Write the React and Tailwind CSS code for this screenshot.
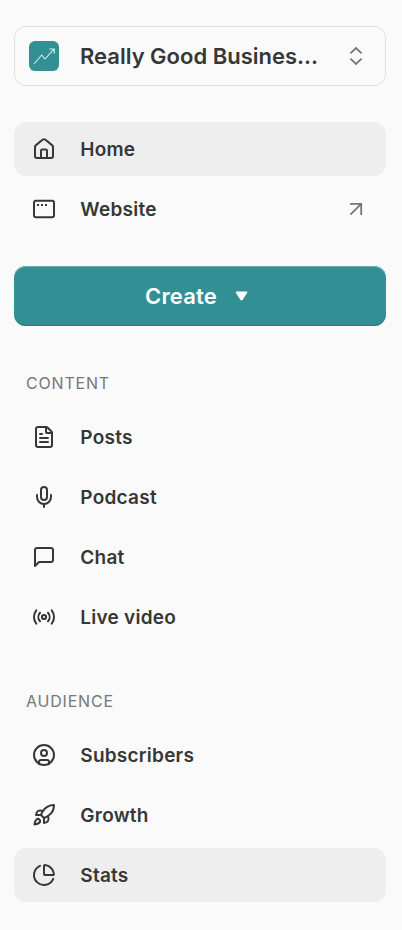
import { ChartPie, CircleUser, FileText, Mic, Rocket } from 'lucide-react'

const CONTENT = [
  { label: 'Posts', icon: FileText },
  { label: 'Podcast', icon: Mic },
  { label: 'Chat', icon: ChatIcon },
  { label: 'Live video', icon: LiveIcon },
]

const AUDIENCE = [
  { label: 'Subscribers', icon: CircleUser },
  { label: 'Growth', icon: Rocket },
  { label: 'Stats', icon: ChartPie, active: true },
]

function Icon({ children }) {
  return (
    <svg
      width="24"
      height="24"
      viewBox="0 0 24 24"
      fill="none"
      stroke="currentColor"
      strokeWidth="2"
      strokeLinecap="round"
      strokeLinejoin="round"
    >
      {children}
    </svg>
  )
}

function HomeIcon() {
  return (
    <Icon>
      <path d="M3 10.2a2.6 2.6 0 0 1 1-2.1l6.5-5.3a2.4 2.4 0 0 1 3 0L20 8.1a2.6 2.6 0 0 1 1 2.1V19a2 2 0 0 1-2 2H5a2 2 0 0 1-2-2z" />
      <path d="M9 21v-7.2a1.2 1.2 0 0 1 1.2-1.2h3.6a1.2 1.2 0 0 1 1.2 1.2V21" />
    </Icon>
  )
}

function WindowIcon() {
  return (
    <Icon>
      <rect x="2" y="3.7" width="20" height="16.6" rx="2" />
      <path d="M5 8h2M9 8h2M13 8h2" strokeWidth="1.9" strokeLinecap="butt" />
    </Icon>
  )
}

function ChatIcon() {
  return (
    <Icon>
      <path d="M21 15a2 2 0 0 1-2 2H7l-4 4V5a2 2 0 0 1 2-2h14a2 2 0 0 1 2 2z" />
    </Icon>
  )
}

function LiveIcon() {
  return (
    <Icon>
      <path d="M4.3 18.7C1.2 14.8 1.2 9.2 4.3 5.3M8 16.2c-2.2-2.4-2.2-6 0-8.4M16 7.8c2.2 2.4 2.2 6 0 8.4M19.7 5.3c3.1 3.9 3.1 9.5 0 13.4" />
      <circle cx="12" cy="12" r="2.1" />
    </Icon>
  )
}

function NavItem({ label, icon: ItemIcon, active, trailing }) {
  return (
    <a
      className={`flex h-[54px] items-center rounded-xl pl-[18px] pr-[23px] ${active ? 'bg-[#eeeeee]' : ''}`}
    >
      <ItemIcon />
      <span className="ml-[24.3px] flex-1 pt-0.5 text-[19px] font-semibold leading-6 tracking-[0.24px]">{label}</span>
      {trailing}
    </a>
  )
}

function Section({ title, items }) {
  return (
    <section>
      <h2 className="pl-3 text-[16px] leading-5 tracking-[0.8px] text-[#777777]">{title}</h2>
      <nav className="mt-[17px] flex flex-col gap-1.5">
        {items.map(item => (
          <NavItem key={item.label} {...item} />
        ))}
      </nav>
    </section>
  )
}

export default function App() {
  return (
    <div className="h-[930px] w-[402px] bg-[#fafafa] pl-[14px] pr-4 pt-[26px] font-['Inter',sans-serif] text-[#363737]">
      <button className="flex h-[60px] w-full items-center rounded-xl border border-[#e1e1e1] px-[14px] text-left">
        <span className="flex size-[30px] items-center justify-center rounded-md bg-[#329094]">
          <svg width="30" height="30" viewBox="0 0 30 30" fill="none" stroke="#d9eeee" strokeWidth="1.1">
            <path d="M5 23l7.7-9 3.3 4 9-9.8M20.3 8h5v4.5" />
          </svg>
        </span>
        <span className="ml-[21px] flex-1 whitespace-nowrap text-[22px] font-semibold">
          Really Good Busines...
        </span>
        {/* up / down switcher */}
        <svg className="mr-2" width="14" height="20" viewBox="0 0 14 20" fill="none" stroke="#777777" strokeWidth="1.8">
          <path d="M1.4 7.4L7 2.1l5.6 5.3M1.4 12.6L7 17.9l5.6-5.3" />
        </svg>
      </button>

      <nav className="mt-9 flex flex-col gap-1.5">
        <NavItem label="Home" icon={HomeIcon} active />
        <NavItem
          label="Website"
          icon={WindowIcon}
          trailing={
            <svg width="14" height="14" viewBox="0 0 14 14" fill="none" stroke="#777777" strokeWidth="1.8">
              <path d="M1 1.9h11.2V13M12.2 1.9L1.4 12.7" />
            </svg>
          }
        />
      </nav>

      <button className="mt-[30px] flex h-[60px] w-full items-center justify-center gap-[18px] rounded-xl bg-[#329094] pr-[7px] text-[22px] font-semibold tracking-[0.15px] text-white shadow-[inset_0_1px_1px_#6cb1b3,inset_0_-1px_1px_#277b7e]">
        Create
        <svg width="13" height="10" viewBox="0 0 13 10" fill="white" stroke="white" strokeWidth="1.6" strokeLinejoin="round">
          <path d="M1.5 1.3h10L7 8.2q-.5.6-1 0z" />
        </svg>
      </button>

      <div className="mt-[47px] flex flex-col gap-[47px]">
        <Section title="CONTENT" items={CONTENT} />
        <Section title="AUDIENCE" items={AUDIENCE} />
      </div>
    </div>
  )
}
